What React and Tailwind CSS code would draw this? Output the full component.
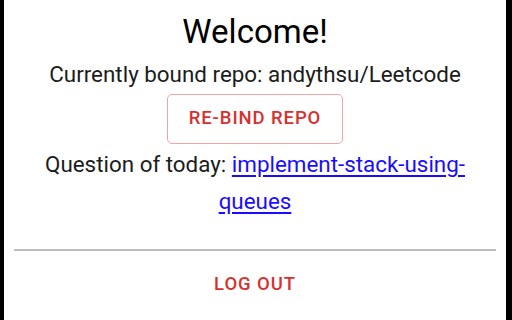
import React from "react";

const App = () => {
  return (
    <div className="w-[512px] h-[320px] flex bg-black">
      <div className="ml-[4px] mr-[6px] flex-1 bg-white px-[10px] font-['Roboto',sans-serif] text-[#1c1c1c] text-center">
        {/* Header */}
        <h1 className="mt-[12px] h-[40px] leading-[40px] text-[33px] text-black">Welcome!</h1>
        <p className="mt-[4px] text-[22.4px] leading-[37px]">
          Currently bound repo: andythsu/Leetcode
        </p>

        <div className="flex justify-center mt-[1px]">
          <button className="h-[50px] w-[176px] rounded-[5px] border border-[#f3a5a5] text-[#d6312f] text-[18.5px] font-medium tracking-[0.9px]">
            RE-BIND REPO
          </button>
        </div>

        <p className="mt-[2px] text-[22.4px] leading-[37px]">
          Question of today:{" "}
          <a href="#" className="text-[#1a0dff] underline underline-offset-[3px]">
            implement-stack-using-queues
          </a>
        </p>

        {/* Divider */}
        <div className="mt-[29px] h-[2px] bg-[#bdbdbd]" />

        <div className="flex justify-center">
          <button className="mt-[12px] h-[44px] px-4 text-[#d6312f] text-[18.5px] font-medium tracking-[0.9px]">
            LOG OUT
          </button>
        </div>
      </div>
    </div>
  );
};

export default App;
